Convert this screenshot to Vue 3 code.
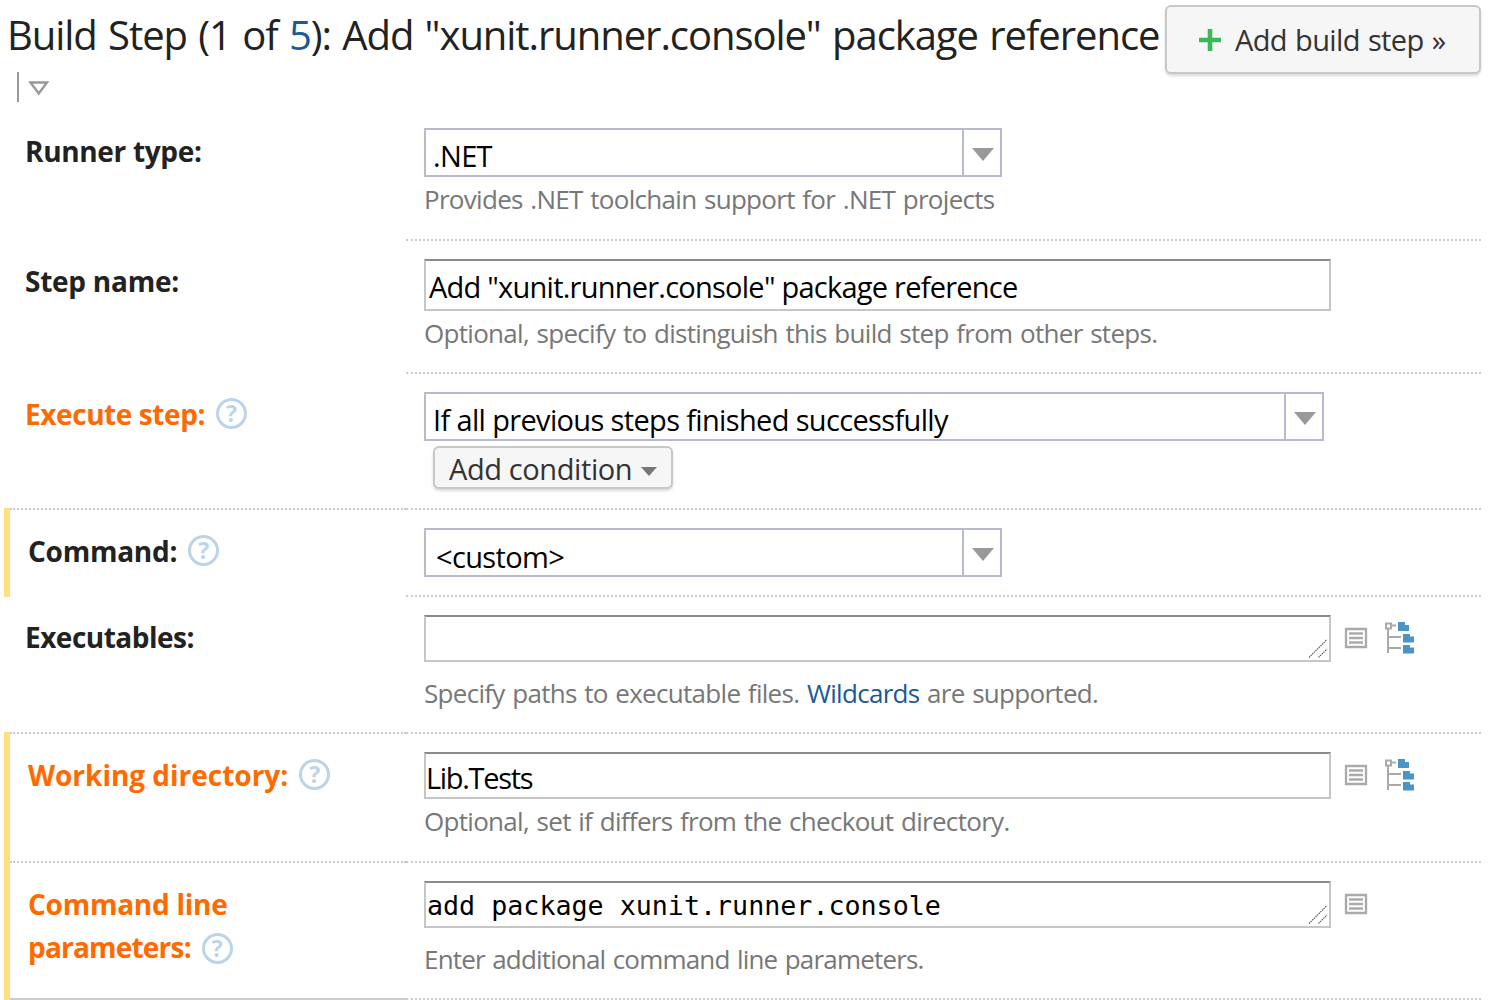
<script setup>
const treeFolders = [
  'M13 0h7v3h4v6h-11z',
  'M18 12h7v2.5h4v6h-11z',
  'M18 23h7v2.5h4v6h-11z',
]
</script>

<template>
  <div class="page">
    <header class="head">
      <h1 class="title">Build Step (1 of <a class="step-link">5</a>): Add "xunit.runner.console" package reference</h1>
      <button class="add-step">
        <svg class="plus" width="24" height="24" viewBox="0 0 24 24"><path d="M12 1v22M1 12h22" stroke="#3cb85c" stroke-width="4.6" fill="none"/></svg>
        <span>Add build step »</span>
      </button>
    </header>
    <div class="toggle">
      <span class="toggle-bar"></span>
      <svg width="22" height="16" viewBox="0 0 22 16"><path d="M2.500 2.500h16.500L10.750 13.500z" fill="none" stroke="#999" stroke-width="2.400"/></svg>
    </div>

    <div class="form">
      <section class="row r1">
        <div class="label-cell"><span class="label">Runner type:</span></div>
        <div class="field-cell">
          <div class="select s-short"><span class="select-text">.NET</span><span class="select-arrow"></span></div>
          <p class="hint h-select">Provides .NET toolchain support for .NET projects</p>
        </div>
      </section>

      <section class="row r2">
        <div class="label-cell"><span class="label">Step name:</span></div>
        <div class="field-cell">
          <input class="input i-name" value='Add "xunit.runner.console" package reference' />
          <p class="hint h-name">Optional, specify to distinguish this build step from other steps.</p>
        </div>
      </section>

      <section class="row r3 full-line">
        <div class="label-cell"><span class="label orange">Execute step:</span><span class="help">?</span></div>
        <div class="field-cell">
          <div class="select s-long"><span class="select-text">If all previous steps finished successfully</span><span class="select-arrow"></span></div>
          <button class="condition">Add condition<span class="caret"></span></button>
        </div>
      </section>

      <section class="row r4 bar">
        <div class="label-cell"><span class="label">Command:</span><span class="help">?</span></div>
        <div class="field-cell">
          <div class="select s-short"><span class="select-text custom">&lt;custom&gt;</span><span class="select-arrow"></span></div>
        </div>
      </section>

      <section class="row r5 full-line">
        <div class="label-cell"><span class="label">Executables:</span></div>
        <div class="field-cell">
          <div class="with-icons">
            <div class="area-wrap">
              <textarea class="area"></textarea>
              <svg class="grip" width="20" height="20" viewBox="0 0 20 20"><path d="M1 19.500L19 1.500M10.500 19.500L19 11" stroke="#555" stroke-width="1.100" stroke-dasharray="1.500 .8" fill="none"/></svg>
            </div>
            <svg class="list-icon" width="24" height="22" viewBox="0 0 24 22"><path d="M2 2h20v18H2zM5 6.500h14M5 11h14M5 15.500h14" fill="none" stroke="#aaa" stroke-width="2.300"/></svg>
            <svg class="tree-icon" width="30" height="32" viewBox="0 0 30 32">
              <path d="M3 6v25M6 3.500h5M3 15h13M3 26h13" fill="none" stroke="#aaa" stroke-width="2"/>
              <rect x="1" y="1.500" width="5" height="5" fill="#fff" stroke="#aaa" stroke-width="2"/>
              <path v-for="d in treeFolders" :key="d" :d="d" fill="#4a94c8"/>
            </svg>
          </div>
          <p class="hint h-exe">Specify paths to executable files. <a class="link">Wildcards</a> are supported.</p>
        </div>
      </section>

      <section class="row r6 bar full-line">
        <div class="label-cell"><span class="label orange">Working directory:</span><span class="help">?</span></div>
        <div class="field-cell">
          <div class="with-icons">
            <input class="input i-dir" value="Lib.Tests" />
            <svg class="list-icon" width="24" height="22" viewBox="0 0 24 22"><path d="M2 2h20v18H2zM5 6.500h14M5 11h14M5 15.500h14" fill="none" stroke="#aaa" stroke-width="2.300"/></svg>
            <svg class="tree-icon" width="30" height="32" viewBox="0 0 30 32">
              <path d="M3 6v25M6 3.500h5M3 15h13M3 26h13" fill="none" stroke="#aaa" stroke-width="2"/>
              <rect x="1" y="1.500" width="5" height="5" fill="#fff" stroke="#aaa" stroke-width="2"/>
              <path v-for="d in treeFolders" :key="d" :d="d" fill="#4a94c8"/>
            </svg>
          </div>
          <p class="hint h-dir">Optional, set if differs from the checkout directory.</p>
        </div>
      </section>

      <section class="row r7 bar last">
        <div class="label-cell"><span class="label orange">Command line<br /><span class="tight">parameters:</span><span class="help inline">?</span></span></div>
        <div class="field-cell">
          <div class="with-icons">
            <div class="area-wrap">
              <textarea class="area a-params" spellcheck="false">add package xunit.runner.console</textarea>
              <svg class="grip" width="20" height="20" viewBox="0 0 20 20"><path d="M1 19.500L19 1.500M10.500 19.500L19 11" stroke="#555" stroke-width="1.100" stroke-dasharray="1.500 .8" fill="none"/></svg>
            </div>
            <svg class="list-icon" width="24" height="22" viewBox="0 0 24 22"><path d="M2 2h20v18H2zM5 6.500h14M5 11h14M5 15.500h14" fill="none" stroke="#aaa" stroke-width="2.300"/></svg>
          </div>
          <p class="hint h-params">Enter additional command line parameters.</p>
        </div>
      </section>
    </div>
  </div>
</template>

<style>
html, body { background: #fff; overflow: hidden; }
</style>

<style scoped>
.page {
  width: 1494px;
  height: 1000px;
  overflow: hidden;
  font-family: "Open Sans", "Noto Sans", sans-serif;
  color: #222;
  box-sizing: border-box;
}
.head {
  display: flex;
  align-items: flex-start;
  padding: 5px 13px 0 7px;
  height: 70px;
  box-sizing: border-box;
}
.title {
  margin: 4px 0 0;
  font-size: 40px;
  line-height: 52px;
  font-weight: 400;
  letter-spacing: -1.06px;
  word-spacing: 2px;
  white-space: nowrap;
  color: #222;
  flex: 1;
}
.step-link { color: #1a5a96; }
.add-step {
  width: 316px;
  height: 69px;
  box-sizing: border-box;
  display: flex;
  align-items: center;
  border: 2px solid #c8c8c8;
  border-radius: 6px;
  background: #f6f6f6;
  box-shadow: 0 2px 3px rgba(0,0,0,.15);
  font: 400 29px "Open Sans", sans-serif;
  letter-spacing: -.65px;
  word-spacing: 1.300px;
  color: #333;
  padding: 0 0 0 31px;
  white-space: nowrap;
}
.plus { margin-right: 13px; flex: none; }
.toggle {
  height: 40px;
  padding-left: 17px;
  display: flex;
  align-items: flex-start;
  gap: 9px;
  box-sizing: border-box;
}
.toggle-bar { width: 2px; height: 30px; margin-top: 2px; background: #999; }
.toggle svg { margin-top: 10px; }

.form { margin-left: 4px; width: 1477px; }
.row {
  display: grid;
  grid-template-columns: 396px 1075px;
  border-left: 6px solid transparent;
}
.row.bar { border-left-color: #ffdf80; }
.r1 { height: 131px; }
.r2 { height: 133px; }
.r3 { height: 136px; }
.r4 { height: 89px; margin-top: -2px; }
.r5 { height: 137px; }
.r6 { height: 131px; margin-top: -2px; }
.r7 { height: 137px; }
.label-cell {
  box-sizing: border-box;
  padding-left: 15px;
  display: flex;
  align-items: flex-start;
  gap: 11px;
}
.bar .label-cell { padding-left: 18px; }
.field-cell {
  box-sizing: border-box;
  padding-left: 18px;
  padding-top: 18px;
  border-bottom: 2px dotted #ccc;
}
.r4 .field-cell, .r6 .field-cell { padding-top: 20px; }
.full-line .label-cell { border-bottom: 2px dotted #ccc; }
.last .label-cell { border-bottom: 2px solid #ccc; }

.label {
  font-weight: 700;
  font-size: 28px;
  line-height: 43px;
  letter-spacing: -.25px;
  color: #222;
  white-space: nowrap;
}
.orange { color: #ff6a00; }
.tight { letter-spacing: -.8px; }
.r1 .label { letter-spacing: -.33px; }
.r3 .label { letter-spacing: -.42px; }
.r5 .label { letter-spacing: -.5px; }
.r6 .label { letter-spacing: -.02px; }
.r1 .label-cell { padding-top: 20px; }
.r2 .label-cell { padding-top: 19px; }
.r3 .label-cell { padding-top: 19px; }
.r4 .label-cell { padding-top: 22px; }
.r5 .label-cell { padding-top: 19px; }
.r6 .label-cell { padding-top: 22px; }
.r7 .label-cell { padding-top: 20px; }
.help {
  width: 31px;
  height: 31px;
  box-sizing: border-box;
  border: 3px solid #bcd4ea;
  border-radius: 50%;
  color: #bcd4ea;
  font-weight: 700;
  font-size: 23px;
  line-height: 25px;
  text-align: center;
  letter-spacing: 0;
  margin-top: 5px;
  flex: none;
}
.help.inline {
  display: inline-block;
  margin: 0 0 0 11px;
  vertical-align: 1px;
}

.select {
  display: flex;
  height: 49px;
  box-sizing: border-box;
  border: 2px solid #b8bbcf;
  background: #fff;
}
.s-short { width: 578px; }
.s-long { width: 900px; }
.select-text {
  flex: 1;
  padding-left: 7px;
  font-size: 29px;
  line-height: 51px;
  letter-spacing: -.65px;
  color: #000;
  white-space: nowrap;
}
.select-text.custom { padding-left: 10px; line-height: 53px; }
.select-arrow {
  width: 36px;
  border-left: 2px solid #b8bbcf;
  position: relative;
  flex: none;
}
.select-arrow::after {
  content: "";
  position: absolute;
  left: 8px;
  top: 18px;
  border: 11px solid transparent;
  border-top: 13px solid #999;
  border-bottom: 0;
}

.input, .area {
  display: block;
  box-sizing: border-box;
  width: 907px;
  border: 2px solid #c6c6c6;
  border-top-color: #8a8a8a;
  border-radius: 0;
  outline: 0;
  background: #fff;
  margin: 0;
  color: #000;
  font-family: "Open Sans", sans-serif;
  font-size: 29px;
}
.input { padding: 3px 0 0 3px; }
.i-name { height: 52px; letter-spacing: -.76px; }
.i-dir { height: 47px; padding-left: 0; letter-spacing: -1.3px; flex: none; }
.area {
  height: 47px;
  padding: 0 1px;
  overflow: hidden;
  resize: none;
}
.area-wrap { position: relative; flex: none; }
.grip { position: absolute; right: 3px; bottom: 4px; pointer-events: none; }
.a-params {
  font-family: "DejaVu Sans Mono", monospace;
  font-size: 26.680px;
  line-height: 45px;
}
.with-icons { display: flex; align-items: flex-start; }
.list-icon { margin: 12px 0 0 13px; flex: none; }
.tree-icon { margin: 7px 0 0 17px; flex: none; }

.hint {
  margin: 0;
  font-size: 26px;
  line-height: 36px;
  letter-spacing: -.7px;
  word-spacing: 1.500px;
  color: #777;
  white-space: nowrap;
}
.h-select, .h-name, .h-dir { margin-top: 4px; }
.h-exe, .h-params { margin-top: 13px; }
.h-params { letter-spacing: -.82px; }
.link { color: #1a5a96; }

.condition {
  display: block;
  margin: 5px 0 0 9px;
  width: 240px;
  height: 43px;
  box-sizing: border-box;
  border: 2px solid #c8c8c8;
  border-radius: 6px;
  background: #f6f6f6;
  box-shadow: 0 2px 3px rgba(0,0,0,.15);
  font: 400 29px "Open Sans", sans-serif;
  letter-spacing: -.4px;
  color: #333;
  padding: 1px 0 0 14px;
  text-align: left;
  white-space: nowrap;
}
.caret {
  display: inline-block;
  margin-left: 9px;
  border: 8px solid transparent;
  border-top: 9px solid #777;
  border-bottom: 0;
  vertical-align: 4px;
}
</style>
